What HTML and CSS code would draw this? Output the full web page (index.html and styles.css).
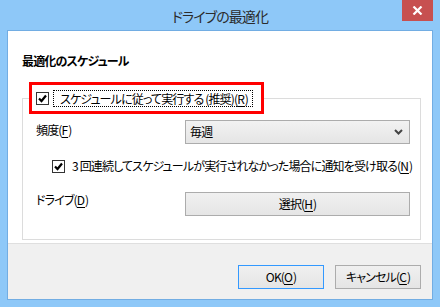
FILE: index.html
```html
<!DOCTYPE html>
<html lang="ja">
<head>
<meta charset="utf-8">
<title>ドライブの最適化</title>
<link rel="stylesheet" href="styles.css">
</head>
<body>
<div class="window">
  <div class="titlebar">
    <span></span>
    <span class="title">ドライブの最適化</span>
    <button class="close" aria-label="閉じる">
      <svg width="11" height="9" viewBox="0 0 11 9"><path d="M1.5 0.5 L9.5 8.5 M9.5 0.5 L1.5 8.5" stroke="#fff" stroke-width="2.2" fill="none"/></svg>
    </button>
  </div>
  <div class="client">
    <div class="content">
      <div class="heading">最適化のスケジュール</div>
      <fieldset class="group">
        <legend class="legend">
          <span class="highlight">
            <span class="checkbox"><svg width="11" height="11" viewBox="0 0 11 11"><path d="M2 5.5 L4.5 8 L9 2.5" stroke="#000" stroke-width="2.2" fill="none"/></svg></span>
            <span class="focus">スケジュールに従って実行する (推奨)(<u>R</u>)</span>
          </span>
        </legend>
        <div class="row">
          <span class="label">頻度(<u>F</u>)</span>
          <div class="select">
            <span>毎週</span>
            <svg width="9" height="6" viewBox="0 0 9 6"><path d="M1 1 L4.5 4.5 L8 1" stroke="#444" stroke-width="2" fill="none"/></svg>
          </div>
        </div>
        <div class="row notify">
          <span class="checkbox"><svg width="11" height="11" viewBox="0 0 11 11"><path d="M2 5.5 L4.5 8 L9 2.5" stroke="#000" stroke-width="2.2" fill="none"/></svg></span>
          <span class="text">3 回連続してスケジュールが実行されなかった場合に通知を受け取る(<u>N</u>)</span>
        </div>
        <div class="row drive">
          <span class="label">ドライブ(<u>D</u>)</span>
          <button class="btn wide">選択(<u>H</u>)</button>
        </div>
      </fieldset>
    </div>
    <div class="footer">
      <button class="btn default">OK(<u>O</u>)</button>
      <button class="btn">キャンセル(<u>C</u>)</button>
    </div>
  </div>
</div>
</body>
</html>
```

FILE: styles.css
```css
* { box-sizing: border-box; }
html, body { margin: 0; padding: 0; }
body {
  width: 440px;
  height: 307px;
  overflow: hidden;
  font-family: "Noto Sans CJK JP", "Noto Sans", sans-serif;
  font-feature-settings: "palt";
  font-size: 12px;
  letter-spacing: -0.85px;
  color: #000;
}
.window {
  width: 440px;
  height: 307px;
  background: #8ec8f8;
  display: flex;
  flex-direction: column;
}
.titlebar {
  height: 30px;
  display: grid;
  grid-template-columns: 1fr auto 1fr;
  align-items: start;
}
.title {
  font-size: 14px;
  letter-spacing: -0.9px;
  line-height: 18px;
  padding-top: 7px;
  color: #2b2b2b;
}
.close {
  justify-self: end;
  margin-right: 7px;
  width: 31px;
  height: 21px;
  border: 0;
  padding: 0;
  background: #c75050;
  display: flex;
  align-items: center;
  justify-content: center;
}
.client {
  margin: 0 7px 0 7px;
  height: 270px;
  border: 1px solid #72ade3;
  display: flex;
  flex-direction: column;
  background: #fff;
}
.content {
  height: 213px;
  border-bottom: 1px solid #dfdfdf;
  padding: 22px 11px 0 14px;
}
.heading {
  font-weight: bold;
  line-height: 16px;
  margin-bottom: 13px;
}
.group {
  margin: 0;
  border: 1px solid #dcdcdc;
  padding: 0 10px 23px 6px;
  min-inline-size: 0;
}
.legend {
  padding: 0;
  margin: 0;
}
.highlight {
  display: flex;
  align-items: center;
  height: 32px;
  border: 3px solid #ff0000;
  padding: 0 8px 0 4px;
  gap: 4px;
}
.checkbox {
  width: 13px;
  height: 13px;
  border: 1px solid #333;
  background: #fff;
  display: flex;
  align-items: center;
  justify-content: center;
  flex: none;
}
.focus {
  border: 1px dotted #000;
  line-height: 15px;
  padding: 0 4px 0 6px;
  white-space: nowrap;
}
.row {
  display: flex;
  align-items: flex-start;
  padding-left: 7px;
}
.row:first-of-type { margin-top: 6px; }
.label {
  width: 149px;
  line-height: 16px;
  margin-top: 2px;
  flex: none;
}
.select {
  width: 225px;
  height: 24px;
  border: 1px solid #acacac;
  background: linear-gradient(#f2f2f2, #e5e5e5);
  display: flex;
  align-items: center;
  justify-content: space-between;
  padding: 0 6px 0 4px;
  line-height: 16px;
}
.notify {
  margin-top: 14px;
  padding-left: 23px;
  align-items: center;
  gap: 7px;
}
.notify .text { line-height: 16px; white-space: nowrap; }
.drive { margin-top: 18px; }
.drive .label { margin-top: 0; }
.btn {
  font: inherit;
  letter-spacing: inherit;
  color: #000;
  height: 24px;
  border: 1px solid #acacac;
  background: linear-gradient(#f0f0f0, #e5e5e5);
  padding: 0;
  line-height: 16px;
}
.wide { width: 225px; }
.footer {
  flex: 1;
  background: #f0f0f0;
  display: flex;
  justify-content: flex-end;
  align-items: flex-start;
  padding: 21px 11px 0 0;
  gap: 11px;
}
.footer .btn { width: 86px; height: 24px; }
.footer .default { border-color: #3399ff; }
u { letter-spacing: 0; text-decoration-thickness: 1px; text-underline-offset: 2px; }
```
